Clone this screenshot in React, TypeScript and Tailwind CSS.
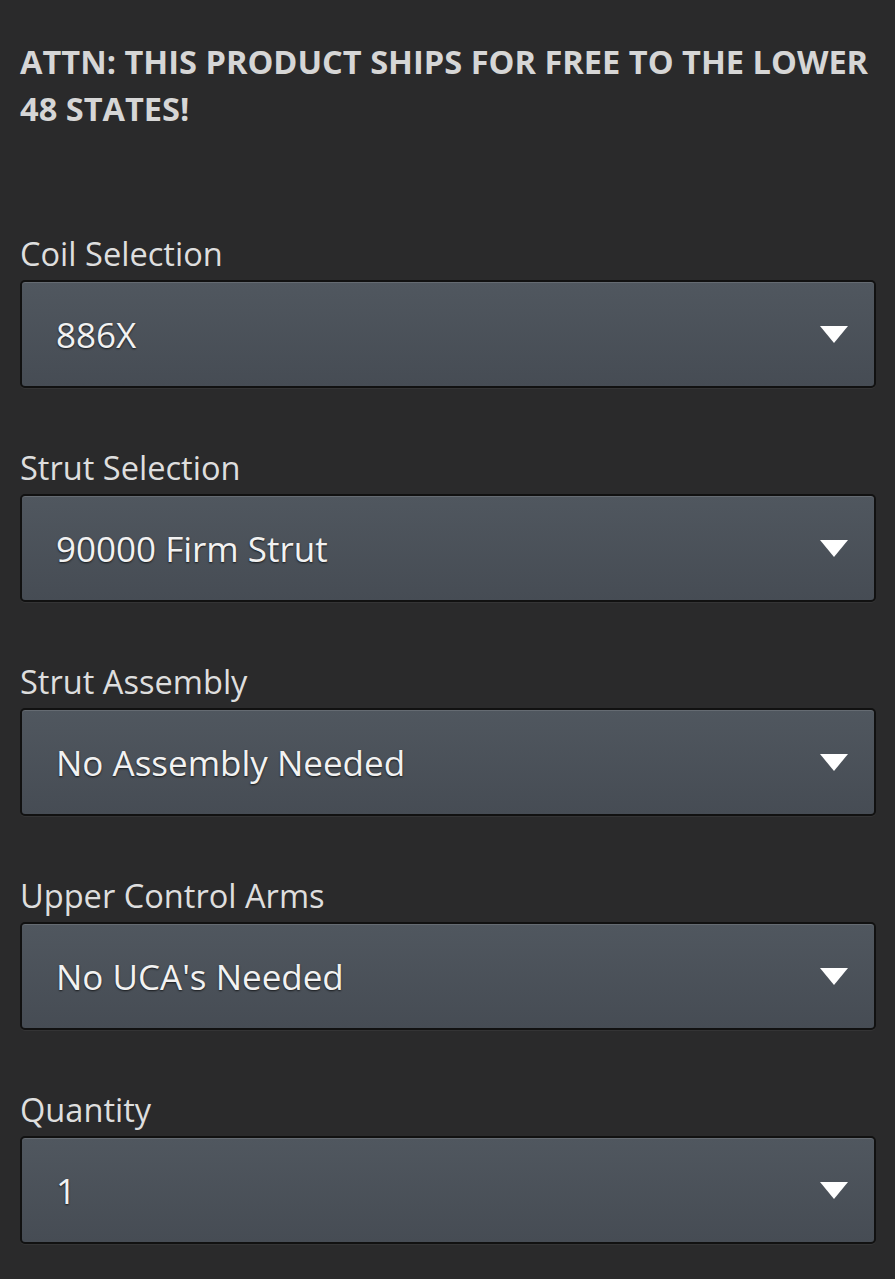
const fields = [
  { label: 'Coil Selection', value: '886X' },
  { label: 'Strut Selection', value: '90000 Firm Strut' },
  { label: 'Strut Assembly', value: 'No Assembly Needed' },
  { label: 'Upper Control Arms', value: "No UCA's Needed" },
  { label: 'Quantity', value: '1' },
];

const SelectBox = ({ value }: { value: string }) => (
  <div className="flex h-[108px] items-center justify-between rounded-[5px] border-2 border-[#111111] bg-gradient-to-b from-[#50575f] to-[#464c54] pl-[34px] pr-[26px] shadow-[inset_0_1px_0_rgba(255,255,255,0.12),0_1px_0_rgba(255,255,255,0.05)]">
    <span className="text-[35px] leading-none text-[#f2f2f2] [text-shadow:0_1px_2px_rgba(0,0,0,0.7)]">
      {value}
    </span>
    <svg width="28" height="17" viewBox="0 0 28 17" aria-hidden="true">
      <polygon points="0,0 28,0 14,17" fill="#ffffff" />
    </svg>
  </div>
);

export default function App() {
  return (
    <div className="min-h-[1279px] w-full bg-[#2a2a2b] px-5 pb-10 pt-[38px] pr-[19px] font-['Open_Sans',sans-serif]">
      <h1 className="text-[32.6px] font-bold uppercase leading-[47px] text-[#d6d6d6]">
        Attn: This product ships for free to the lower 48 states!
      </h1>
      <div className="mt-[102px] flex flex-col gap-[60px]">
        {fields.map((f) => (
          <div key={f.label}>
            <label className="mb-[6px] block text-[32.6px] leading-[40px] text-[#dedede]">
              {f.label}
            </label>
            <SelectBox value={f.value} />
          </div>
        ))}
      </div>
    </div>
  );
}
